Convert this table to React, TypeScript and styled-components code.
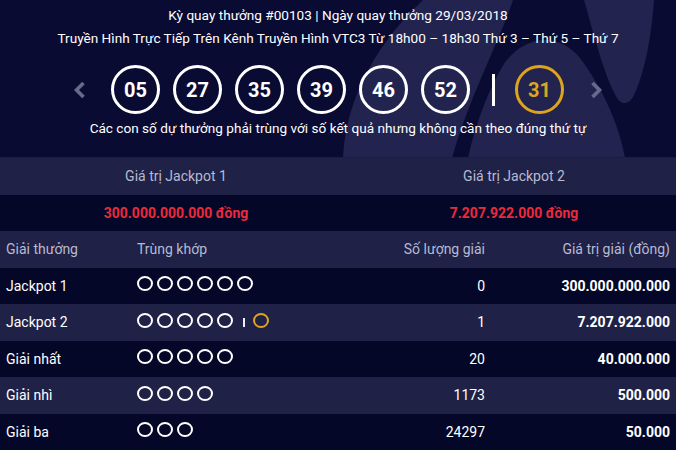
import React from "react";
import styled, { createGlobalStyle } from "styled-components";

const Global = createGlobalStyle`
  html, body { margin: 0; padding: 0; background: #070930; }
  body { font-family: Roboto, "Noto Sans", Arial, sans-serif; }
  * { box-sizing: border-box; }
`;

const Page = styled.div`
  width: 676px;
  height: 450px;
  overflow: hidden;
  background: #070930;
`;

const Header = styled.header`
  position: relative;
  height: 158px;
  background: #0a0b33;
  border-bottom: 1px solid #1a1c45;
  overflow: hidden;
  display: flex;
  flex-direction: column;
  align-items: center;
  color: #fff;
`;

const Decor = styled.svg`
  position: absolute;
  left: 0;
  top: 0;
  width: 676px;
  height: 158px;
  pointer-events: none;
`;

const Line = styled.div<{ $top: number }>`
  position: relative;
  margin-top: ${(p) => p.$top}px;
  font-size: 13.6px;
  font-weight: 400;
  line-height: 18px;
  white-space: nowrap;
`;

const BallRow = styled.div`
  position: relative;
  margin-top: 18px;
  display: flex;
  align-items: center;
`;

const Chevron = styled.svg<{ $gap: number; $side: "l" | "r" }>`
  width: 13px;
  height: 18px;
  ${(p) => (p.$side === "l" ? `margin-right: ${p.$gap}px;` : `margin-left: ${p.$gap}px;`)}
`;

const Balls = styled.div`
  display: flex;
  gap: 13px;
`;

const Ball = styled.div<{ $gold?: boolean }>`
  width: 49px;
  height: 49px;
  border-radius: 50%;
  border: 3px solid ${(p) => (p.$gold ? "#dea41b" : "#ffffff")};
  color: ${(p) => (p.$gold ? "#dea41b" : "#ffffff")};
  display: flex;
  align-items: center;
  justify-content: center;
  font-size: 20px;
  font-weight: 700;
`;

const Divider = styled.div`
  width: 3px;
  height: 32px;
  background: #fff;
  margin: 0 20px 0 22px;
`;

const Grid = styled.div<{ $light?: boolean }>`
  height: 36.5px;
  display: grid;
  align-items: center;
  background: ${(p) => (p.$light ? "#1f2147" : "#050728")};
`;

const JackpotRow = styled(Grid)`
  grid-template-columns: 352px 1fr;
  text-align: center;
`;

const JackpotCell = styled.div<{ $red?: boolean }>`
  font-size: 14px;
  font-weight: ${(p) => (p.$red ? 700 : 400)};
  color: ${(p) => (p.$red ? "#ea2a3d" : "#b7bad0")};
`;

const TableRow = styled(Grid)`
  grid-template-columns: 131px 148px 200px 185px;
  padding: 0 6px;
`;

const Cell = styled.div<{ $align?: "left" | "right"; $head?: boolean; $bold?: boolean }>`
  font-size: 14px;
  text-align: ${(p) => p.$align ?? "left"};
  color: ${(p) => (p.$head ? "#b7bad0" : "#ffffff")};
  font-weight: ${(p) => (p.$bold ? 700 : 400)};
  white-space: nowrap;
`;

const Matches = styled.div`
  display: flex;
  align-items: flex-end;
  gap: 4px;
  padding-bottom: 4px;
`;

const Dot = styled.span<{ $gold?: boolean }>`
  width: 16px;
  height: 15px;
  border-radius: 50%;
  border: 2.5px solid ${(p) => (p.$gold ? "#dea41b" : "#ffffff")};
`;

const Tick = styled.span`
  width: 2px;
  height: 9px;
  background: #e6f0ff;
  margin: 0 4px 1px 6px;
`;

const ChevronIcon = ({ side, gap }: { side: "l" | "r"; gap: number }) => (
  <Chevron $side={side} $gap={gap} viewBox="0 0 13 18">
    <path
      d={side === "l" ? "M10.5 2 L3.5 9 L10.5 16" : "M2.5 2 L9.5 9 L2.5 16"}
      fill="none"
      stroke="#676a8a"
      strokeWidth="3.6"
      strokeLinejoin="miter"
    />
  </Chevron>
);

const prizes = [
  { name: "Jackpot 1", dots: 6, gold: false, count: "0", value: "300.000.000.000" },
  { name: "Jackpot 2", dots: 5, gold: true, count: "1", value: "7.207.922.000" },
  { name: "Giải nhất", dots: 5, gold: false, count: "20", value: "40.000.000" },
  { name: "Giải nhì", dots: 4, gold: false, count: "1173", value: "500.000" },
  { name: "Giải ba", dots: 3, gold: false, count: "24297", value: "50.000" },
];

export default function App() {
  return (
    <Page>
      <Global />
      <Header>
        <Decor viewBox="0 0 676 158">
          <g fill="#22244f">
            <path d="M423 0 L513 0 C500 40 470 95 452 158 L343 158 C346 95 380 40 423 0 Z" />
            <path d="M545 40 C528 40 515 50 505 62 C488 90 475 125 468 158 L625 158 C618 120 600 85 580 58 C570 46 558 40 545 40 Z" />
            <path d="M584 0 L654 0 C652 30 646 70 634 95 C630 104 622 106 617 98 C604 75 594 35 584 0 Z" />
          </g>
        </Decor>
        <Line $top={6}>Kỳ quay thưởng #00103 | Ngày quay thưởng 29/03/2018</Line>
        <Line $top={5}>Truyền Hình Trực Tiếp Trên Kênh Truyền Hình VTC3 Từ 18h00 – 18h30 Thứ 3 – Thứ 5 – Thứ 7</Line>
        <BallRow>
          <ChevronIcon side="l" gap={25} />
          <Balls>
            {["05", "27", "35", "39", "46", "52"].map((n) => (
              <Ball key={n}>{n}</Ball>
            ))}
          </Balls>
          <Divider />
          <Ball $gold>31</Ball>
          <ChevronIcon side="r" gap={26} />
        </BallRow>
        <Line $top={5}>Các con số dự thưởng phải trùng với số kết quả nhưng không cần theo đúng thứ tự</Line>
      </Header>

      <JackpotRow $light>
        <JackpotCell>Giá trị Jackpot 1</JackpotCell>
        <JackpotCell>Giá trị Jackpot 2</JackpotCell>
      </JackpotRow>
      <JackpotRow>
        <JackpotCell $red>300.000.000.000 đồng</JackpotCell>
        <JackpotCell $red>7.207.922.000 đồng</JackpotCell>
      </JackpotRow>

      <TableRow $light>
        <Cell $head>Giải thưởng</Cell>
        <Cell $head>Trùng khớp</Cell>
        <Cell $head $align="right">Số lượng giải</Cell>
        <Cell $head $align="right">Giá trị giải (đồng)</Cell>
      </TableRow>
      {prizes.map((p, i) => (
        <TableRow key={p.name} $light={i % 2 === 1}>
          <Cell>{p.name}</Cell>
          <Matches>
            {Array.from({ length: p.dots }).map((_, k) => (
              <Dot key={k} />
            ))}
            {p.gold && (
              <>
                <Tick />
                <Dot $gold />
              </>
            )}
          </Matches>
          <Cell $align="right">{p.count}</Cell>
          <Cell $align="right" $bold>
            {p.value}
          </Cell>
        </TableRow>
      ))}
    </Page>
  );
}
